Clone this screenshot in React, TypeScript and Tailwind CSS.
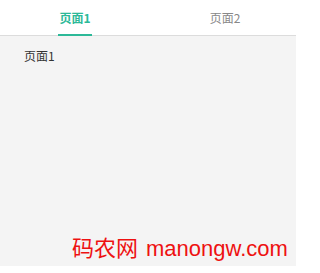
import React from "react";

export default function App() {
  const font = { fontFamily: '"Noto Sans CJK SC", "Noto Sans", sans-serif' };
  return (
    <div className="relative w-[300px] h-[273px] bg-white overflow-hidden" style={font}>
      <div className="w-[296px] h-[266px] flex flex-col bg-[#f4f4f4]">
        <div className="flex h-[36px] bg-white border-b border-[#dcdcdc]">
          <div className="flex-1 flex justify-center">
            <div className="relative h-full flex items-center text-[12px] font-bold text-[#2cb998] px-[1px] ml-[2px]">
              页面1
              <div className="absolute left-0 right-0 bottom-[-1px] h-[2px] bg-[#2cb998]" />
            </div>
          </div>
          <div className="flex-1 flex justify-center">
            <div className="h-full flex items-center text-[12px] text-[#888888] ml-[6px]">页面2</div>
          </div>
        </div>
        <div className="px-[24px] pt-[11px] text-[12px] text-[#333333]">页面1</div>
      </div>
      <div className="absolute left-[72px] top-[231px] text-[22px] leading-[30px] text-[#ee1111] whitespace-nowrap flex items-baseline">
        <span>码农网</span>
        <span className="ml-[8px]" style={{ fontFamily: '"Liberation Sans", sans-serif' }}>
          manongw.com
        </span>
      </div>
    </div>
  );
}
